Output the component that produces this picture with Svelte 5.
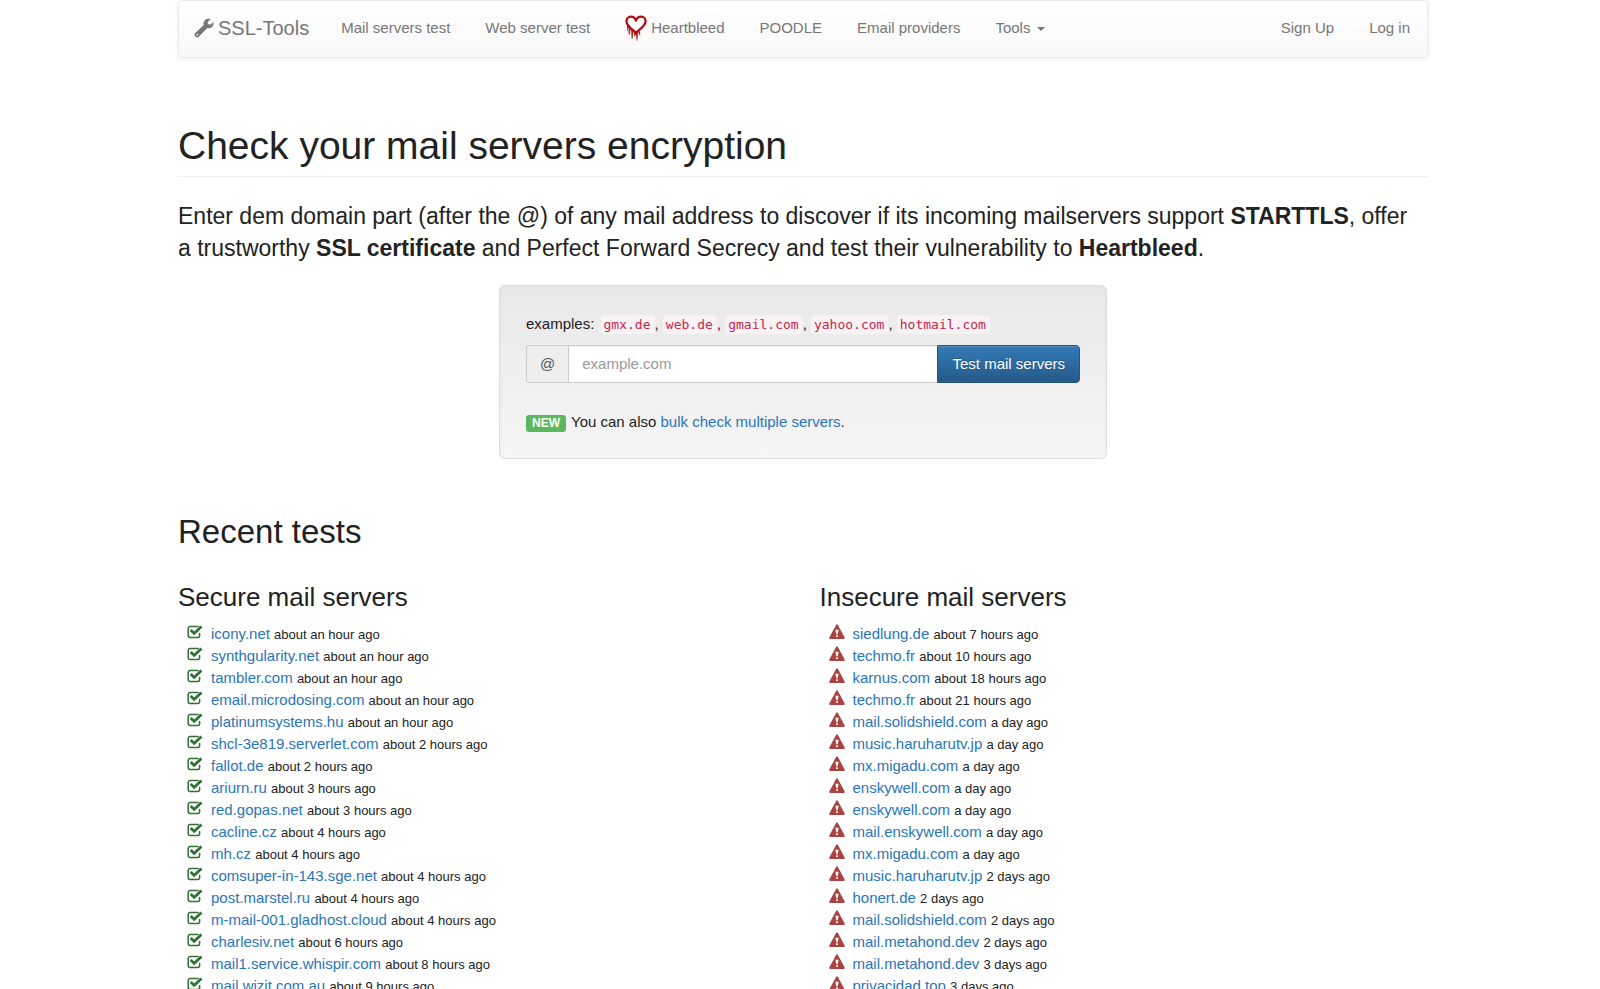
<script>
  let domain = $state('');

  const links = [
    { label: 'Mail servers test' },
    { label: 'Web server test' },
    { label: 'Heartbleed', heart: true },
    { label: 'POODLE' },
    { label: 'Email providers' }
  ];

  const examples = ['gmx.de', 'web.de', 'gmail.com', 'yahoo.com', 'hotmail.com'];

  const lists = [
    {
      title: 'Secure mail servers',
      secure: true,
      rows: [
        ['icony.net', 'about an hour ago'],
        ['synthgularity.net', 'about an hour ago'],
        ['tambler.com', 'about an hour ago'],
        ['email.microdosing.com', 'about an hour ago'],
        ['platinumsystems.hu', 'about an hour ago'],
        ['shcl-3e819.serverlet.com', 'about 2 hours ago'],
        ['fallot.de', 'about 2 hours ago'],
        ['ariurn.ru', 'about 3 hours ago'],
        ['red.gopas.net', 'about 3 hours ago'],
        ['cacline.cz', 'about 4 hours ago'],
        ['mh.cz', 'about 4 hours ago'],
        ['comsuper-in-143.sge.net', 'about 4 hours ago'],
        ['post.marstel.ru', 'about 4 hours ago'],
        ['m-mail-001.gladhost.cloud', 'about 4 hours ago'],
        ['charlesiv.net', 'about 6 hours ago'],
        ['mail1.service.whispir.com', 'about 8 hours ago'],
        ['mail.wizit.com.au', 'about 9 hours ago']
      ]
    },
    {
      title: 'Insecure mail servers',
      secure: false,
      rows: [
        ['siedlung.de', 'about 7 hours ago'],
        ['techmo.fr', 'about 10 hours ago'],
        ['karnus.com', 'about 18 hours ago'],
        ['techmo.fr', 'about 21 hours ago'],
        ['mail.solidshield.com', 'a day ago'],
        ['music.haruharutv.jp', 'a day ago'],
        ['mx.migadu.com', 'a day ago'],
        ['enskywell.com', 'a day ago'],
        ['enskywell.com', 'a day ago'],
        ['mail.enskywell.com', 'a day ago'],
        ['mx.migadu.com', 'a day ago'],
        ['music.haruharutv.jp', '2 days ago'],
        ['honert.de', '2 days ago'],
        ['mail.solidshield.com', '2 days ago'],
        ['mail.metahond.dev', '2 days ago'],
        ['mail.metahond.dev', '3 days ago'],
        ['privacidad.top', '3 days ago']
      ]
    }
  ];
</script>

<div class="page">
  <div class="container">
    <nav class="navbar">
      <a class="brand" href="#home">
        <svg width="20" height="20" viewBox="0 0 20 20" aria-hidden="true">
          <path fill="currentColor" d="M16.600 1.200 13.600 4l.6 2.100 2.200.6 3-2.700c.4 2.200-.2 4-1.600 5.200-1.300 1.100-3 1.400-4.600.9L5 18.500a2.500 2.500 0 0 1-3.600-3.500l8.300-8C9.200 5.300 9.700 3.500 11 2.200c1.400-1.400 3.500-1.700 5.600-1zM3.300 15.900a.9.9 0 1 0 .1 1.800.9.9 0 0 0-.1-1.800z" />
        </svg>
        <span>SSL-Tools</span>
      </a>
      <div class="links">
        {#each links as link}
          <a class="navlink" href="#page">
            {#if link.heart}
              <svg width="22" height="27" viewBox="0 0 22 27" aria-hidden="true">
                <defs>
                  <linearGradient id="drip" x1="0" y1="0" x2="0" y2="1">
                    <stop offset="0" stop-color="#a80d12" />
                    <stop offset="0.65" stop-color="#b8262a" />
                    <stop offset="1" stop-color="#d88" />
                  </linearGradient>
                </defs>
                <path fill="url(#drip)" d="M2 10h2l2 3 6 5.500 3-2.500.3 3.500-1 1-.5-3-.8.800-.2 7.200-1.300.5-.4-5-.9-1.500-.1 2-.8-.2-.4-3.500-.8-1.200-.2 7-1.400.4-.3-8.200-.9-1.200-.2 4.700-1.400.2-.1-6-.8-1-.1 3.500-.7-.1z" />
                <path fill="none" stroke="#b50b10" stroke-width="2.300" stroke-linejoin="round" d="M11 18.200C8.500 14.900 1.500 11.500 1.500 6.200c0-2.600 1.800-4.500 4.200-4.500 2.700 0 4.600 1.800 5.200 4 .7-2.300 2.700-4 5.400-4 2.500 0 4.300 1.900 4.300 4.500 0 5-6.900 8.300-9.600 12z" />
              </svg>
            {/if}
            <span>{link.label}</span>
          </a>
        {/each}
        <button class="navlink" type="button">Tools <span class="caret"></span></button>
      </div>
      <div class="links right">
        <a class="navlink" href="#signup">Sign Up</a>
        <a class="navlink" href="#login">Log in</a>
      </div>
    </nav>

    <main>
      <h1>Check your mail servers encryption</h1>
      <p class="lead">
        Enter dem domain part (after the @) of any mail address to discover if its incoming mailservers
        support <strong>STARTTLS</strong>, offer a trustworthy <strong>SSL certificate</strong> and Perfect
        Forward Secrecy and test their vulnerability to <strong>Heartbleed</strong>.
      </p>

      <form class="well" onsubmit={(e) => e.preventDefault()}>
        <label class="examples" for="domain">
          examples:
          {#each examples as name, i}<code>{name}</code>{i < examples.length - 1 ? ', ' : ''}{/each}
        </label>
        <div class="group">
          <span class="addon">@</span>
          <input id="domain" type="text" placeholder="example.com" bind:value={domain} />
          <button class="submit" type="submit">Test mail servers</button>
        </div>
        <p class="bulk">
          <span class="badge">NEW</span>
          <span>You can also <a href="#bulk">bulk check multiple servers</a>.</span>
        </p>
      </form>

      <h2>Recent tests</h2>
      <div class="columns">
        {#each lists as list}
          <section>
            <h3>{list.title}</h3>
            <ul>
              {#each list.rows as [host, when]}
                <li>
                  {#if list.secure}
                    <svg class="ok" width="16" height="16" viewBox="0 0 16 16" aria-hidden="true">
                      <path fill="none" stroke="currentColor" stroke-width="1.500" d="M11.500 2.500H3.200A2 2 0 0 0 1.200 4.500v7a2 2 0 0 0 2 2h7.400a2 2 0 0 0 2-2V9" />
                      <path fill="none" stroke="currentColor" stroke-width="2.800" d="m3.700 6 3.500 3.400 7.200-7" />
                    </svg>
                  {:else}
                    <svg class="warn" width="16" height="16" viewBox="0 0 16 16" aria-hidden="true">
                      <path fill="currentColor" fill-rule="evenodd" d="M7.200.7a.9.9 0 0 1 1.600 0l6.900 12.700c.4.800.1 1.500-.7 1.500H1c-.8 0-1.100-.7-.7-1.500zM6.400 5.800l.9 4.400h1.400l.9-4.400zM7.100 11.200v1.700h1.800v-1.700z" />
                    </svg>
                  {/if}
                  <span><a href="#result">{host}</a> <small>{when}</small></span>
                </li>
              {/each}
            </ul>
          </section>
        {/each}
      </div>
    </main>
  </div>
</div>

<style>
  :global(body) {
    background: #fff;
  }
  .page {
    box-sizing: border-box;
    padding-left: 6px;
    font: 15px/22px "Liberation Sans", Arial, sans-serif;
    color: #222;
  }
  .page :global(*) {
    box-sizing: border-box;
  }
  .container {
    max-width: 1250px;
    margin: 0 auto;
  }
  a {
    color: #2a75bb;
    text-decoration: none;
  }
  a:hover {
    text-decoration: underline;
  }
  .navbar {
    display: flex;
    align-items: center;
    gap: 32px;
    height: 58px;
    padding: 0 17px 2px 15px;
    border: 1px solid #ebebeb;
    border-radius: 4px;
    background: linear-gradient(#fff, #f8f8f8);
    box-shadow: 0 1px 5px rgba(0, 0, 0, 0.075);
  }
  .links {
    display: flex;
    align-items: center;
    gap: 35px;
  }
  .right {
    margin-left: auto;
  }
  .brand,
  .navlink {
    display: flex;
    align-items: center;
    gap: 4px;
    height: 28px;
    color: #777;
    white-space: nowrap;
  }
  .brand {
    font-size: 20px;
  }
  .navlink {
    padding: 0;
    border: 0;
    background: none;
    font: inherit;
  }
  .caret {
    margin: 2px 0 0 3px;
    border: 4px solid transparent;
    border-top-color: #777;
    border-bottom: 0;
  }
  h1,
  h2,
  h3 {
    margin: 0;
    font-weight: 400;
  }
  h1 {
    margin-top: 66px;
    padding-bottom: 8px;
    border-bottom: 1px solid #f0f0f0;
    font-size: 39px;
    line-height: 44px;
  }
  .lead {
    margin: 23px 0 21px;
    padding-right: 16px;
    font-size: 23px;
    line-height: 32px;
  }
  .well {
    width: calc(50% - 17px);
    margin: 0 auto;
    padding: 27px 26px 25px;
    border: 1px solid #dcdcdc;
    border-radius: 6px;
    background: linear-gradient(#e8e8e8, #f5f5f5);
    box-shadow: inset 0 1px 3px rgba(0, 0, 0, 0.05), 0 1px 0 rgba(255, 255, 255, 0.1);
  }
  .examples {
    display: block;
  }
  code {
    padding: 2px 4px 2px 3px;
    border-radius: 4px;
    background: #f9f2f4;
    color: #c7254e;
    font: 13px "DejaVu Sans Mono", monospace;
  }
  .examples code:first-of-type {
    margin-left: 2px;
  }
  .group {
    display: flex;
    height: 38px;
    margin: 10px 0 28px;
  }
  .addon {
    display: flex;
    align-items: center;
    padding: 0 13px;
    border: 1px solid #ccc;
    border-right: 0;
    border-radius: 4px 0 0 4px;
    background: #eee;
    color: #555;
  }
  input {
    flex: 1;
    min-width: 0;
    padding: 0 13px;
    border: 1px solid #ccc;
    border-right: 0;
    border-radius: 0;
    background: #fff;
    color: #555;
    font: inherit;
    box-shadow: inset 0 1px 1px rgba(0, 0, 0, 0.075);
  }
  input::placeholder {
    color: #999;
    opacity: 1;
  }
  .submit {
    padding: 0 14px;
    border: 1px solid #245580;
    border-radius: 0 4px 4px 0;
    background: linear-gradient(#337ab7, #265a88);
    color: #fff;
    font: inherit;
    text-shadow: 0 -1px 0 rgba(0, 0, 0, 0.2);
    box-shadow: inset 0 1px 0 rgba(255, 255, 255, 0.15);
  }
  .bulk {
    display: flex;
    align-items: center;
    gap: 5px;
    margin: 0;
  }
  .badge {
    margin-top: 2px;
    padding: 0 6px;
    border-radius: 3px;
    background: #5cb85c;
    color: #fff;
    font-size: 12px;
    font-weight: 700;
    line-height: 17px;
  }
  h2 {
    margin-top: 55px;
    font-size: 33px;
    line-height: 36px;
  }
  .columns {
    display: grid;
    grid-template-columns: 1fr 1fr;
    gap: 33px;
    margin-top: 33px;
  }
  h3 {
    font-size: 26px;
    line-height: 29px;
  }
  ul {
    margin: 11px 0;
    padding: 0 0 0 9px;
    list-style: none;
  }
  li {
    display: flex;
    gap: 8px;
  }
  li svg {
    margin-top: 1px;
  }
  .ok {
    color: #2f7033;
  }
  .warn {
    color: #a94442;
  }
  small {
    font-size: 13px;
    line-height: 1;
  }
</style>
